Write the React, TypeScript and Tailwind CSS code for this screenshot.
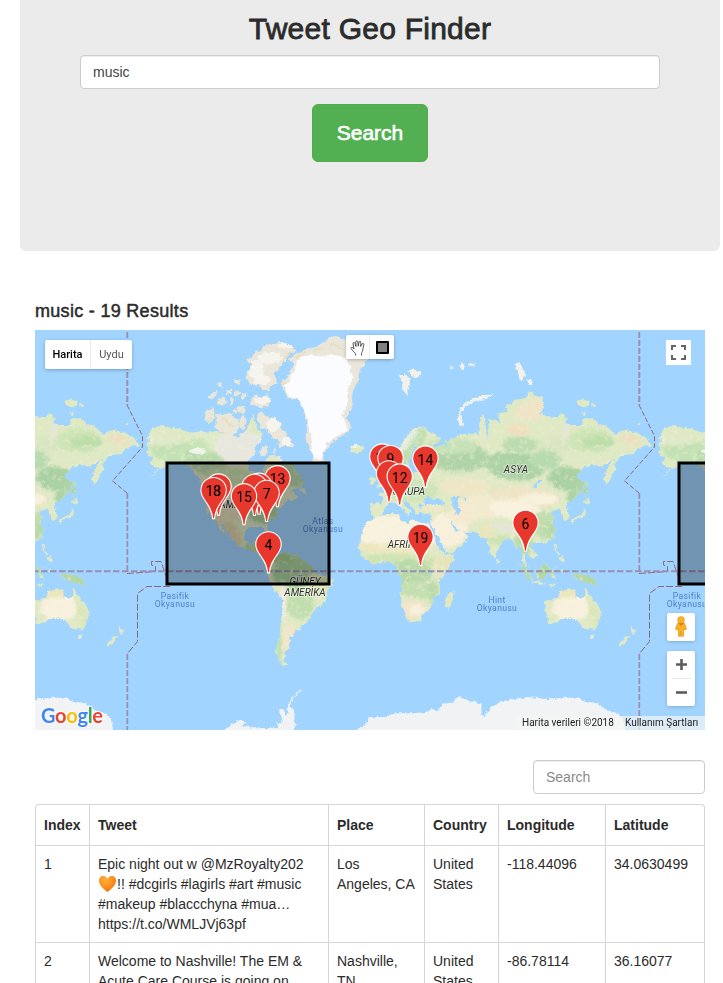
import React from "react";

// Coastlines, drawn at three units per map pixel. Each group has its own origin.
const AMERICAS_NORTH = [
  "M48,345 62,336 50,320 68,294 95,285 120,292 155,296 185,310 215,303 235,308 262,302 275,312 300,318 322,320 338,312 350,298 366,262 362,245 372,262 380,290 395,310 392,335 372,350 380,365 360,385 352,400 356,420 378,425 392,440 402,465 408,440 400,425 405,400 412,385 430,375 448,382 460,408 472,400 484,398 498,425 522,455 518,466 490,478 478,490 492,484 494,494 505,498 485,515 475,508 462,520 460,530 445,535 440,560 415,578 412,590 419,612 412,614 405,598 392,590 376,593 354,592 344,608 343,628 351,641 370,644 374,632 390,629 385,650 388,657 404,659 404,676 418,683 430,684 426,694 412,692 398,682 386,669 366,663 345,655 324,645 308,634 303,618 288,600 280,586 272,580 278,594 288,608 294,622 288,618 276,603 268,590 260,577 246,566 236,549 228,535 228,490 242,482 222,470 204,446 183,413 162,403 136,396 120,400 118,412 100,412 80,425 58,442 90,412 70,408 60,400 68,380 50,372 58,360Z",
  "M258,252 280,256 300,248 310,262 325,270 327,295 305,318 285,315 270,305 256,290 262,272Z",
  "M228,240 250,235 256,262 238,280 225,270Z",
  "M236,205 244,188 262,180 260,192 248,206Z",
  "M262,210 285,202 292,215 278,226 262,222Z",
  "M265,164 275,158 276,168 266,172Z",
  "M310,148 330,152 330,163 315,160Z",
  "M290,180 306,176 304,190 292,194Z M312,182 330,186 325,200 312,196Z",
  "M300,210 306,200 310,222 300,228Z M335,190 350,186 352,202 338,208Z",
  "M322,230 345,228 340,248 324,246Z M305,240 318,236 322,248 312,252Z",
  "M330,268 342,256 350,272 340,300 328,290Z",
  "M352,90 372,72 410,45 450,36 490,48 496,62 476,72 470,88 455,104 432,128 440,156 418,170 420,182 402,180 384,162 364,165 350,148 350,124 370,104Z",
  "M362,205 378,196 390,205 412,194 422,215 412,232 380,230 362,222Z",
  "M382,250 398,248 410,258 436,266 452,280 450,294 466,304 474,322 496,346 480,352 468,344 462,352 445,348 448,330 426,322 412,300 395,300 386,280Z",
  "M396,352 410,345 412,368 398,378 388,368Z M440,380 452,378 454,392 442,390Z M430,352 436,366 430,370Z",
  "M508,474 526,478 530,490 512,488Z",
  "M395,614 418,618 436,628 418,626 400,618Z M440,630 458,634 452,640 438,637Z",
  "M660,350 676,342 698,350 700,362 680,370 666,366Z",
];
const GREENLAND =
  "M548,393 L566,397 578,395 582,365 600,345 625,325 655,308 664,285 650,262 668,225 664,190 682,160 690,120 712,95 730,70 692,62 655,30 615,18 590,30 560,50 525,60 500,68 478,86 492,104 474,138 452,160 460,180 476,202 508,212 522,240 530,290 530,330 546,375Z";
const ICE_CAP =
  "M552,388 L576,388 584,355 592,340 625,316 652,302 648,280 636,258 654,225 656,170 668,140 660,110 645,82 600,72 570,84 535,74 505,88 488,125 478,148 458,172 480,198 512,212 526,250 540,310 546,360Z";
const AMERICA_SOUTH =
  "M100,86 112,72 135,68 160,73 178,80 200,98 216,112 228,130 262,138 278,150 276,164 262,185 256,215 232,232 214,250 211,264 196,282 180,285 186,298 160,306 162,318 148,324 154,334 142,345 147,354 133,368 136,380 128,388 136,398 148,404 130,406 115,390 108,370 112,340 118,320 122,280 128,240 130,205 112,190 95,165 85,145 83,132 90,115 92,100Z";
const EURASIA =
  "M120,143 118,120 150,80 163,57 184,30 215,19 250,42 272,54 268,70 246,74 258,86 280,72 292,80 284,62 310,58 330,42 350,46 375,36 385,48 386,22 390,-8 405,-12 408,20 410,60 416,32 415,0 435,-2 450,10 445,-20 470,-25 465,-40 500,-60 530,-70 540,-88 550,-75 580,-65 582,-35 565,-20 600,-10 625,-8 635,-20 650,-8 645,10 670,15 700,15 700,-5 730,-5 745,15 770,20 795,45 815,30 840,35 860,35 880,50 910,75 900,85 880,75 860,90 850,102 825,105 798,122 793,155 772,195 762,180 768,150 785,125 800,115 772,128 755,140 740,135 705,140 680,170 700,185 695,210 670,240 648,252 654,272 656,294 644,304 636,290 632,274 618,266 605,276 600,284 616,290 606,304 613,325 612,345 595,365 570,372 548,366 540,378 552,390 563,405 546,414 535,398 526,396 522,404 524,420 536,442 526,438 516,420 517,395 510,375 500,384 490,365 470,350 455,370 440,395 432,420 425,410 415,372 410,352 390,350 375,335 345,335 325,325 300,303 302,320 320,335 335,330 355,345 345,370 310,395 288,400 275,368 262,345 250,325 240,306 246,286 235,282 215,280 210,265 225,258 208,250 206,262 214,276 200,285 190,265 178,252 165,240 158,246 182,275 175,286 165,275 150,258 135,248 120,248 105,260 95,285 75,292 60,282 62,250 95,250 100,235 82,222 105,215 120,196 135,178 133,157 142,153 144,178 160,178 188,170 188,157 200,157 202,138 228,133 197,134 189,122 205,84 193,78 186,100 173,122 178,134 170,157 160,168 153,168 146,145 129,152Z";
const AFRICA =
  "M78,291 48,308 30,350 28,388 34,402 50,420 70,433 100,428 122,426 140,437 142,452 155,480 158,505 150,522 158,560 170,590 178,608 205,603 225,580 245,560 250,535 270,520 268,480 280,462 300,435 318,404 290,406 274,395 258,368 246,340 238,312 215,310 190,300 175,310 150,298 146,282 115,282Z";
const ASIA_ISLANDS = [
  "M285,560 288,528 302,520 312,508 308,535 296,566Z",
  "M59,178 68,170 76,180 70,194 60,192Z M84,146 98,144 95,165 108,190 102,200 78,204 88,186 84,165Z",
  "M438,412 448,420 444,428 438,424Z",
  "M508,432 524,442 546,470 544,484 524,466Z M546,482 568,484 590,492 572,494 548,488Z",
  "M555,452 572,444 588,430 600,438 592,462 578,478 560,470Z",
  "M602,450 620,444 608,456 616,472 608,474 603,464Z M595,494 622,494 606,500Z M632,442 640,456 634,456Z",
  "M660,458 676,462 690,460 720,472 736,484 744,494 724,488 700,490 678,472Z",
  "M612,372 622,374 618,392 630,400 626,404 614,390Z M628,410 640,408 640,426 628,420Z M608,346 614,350 610,362Z",
  "M660,302 678,288 696,284 702,262 708,280 700,294 680,298 668,308Z M702,240 718,236 716,250 702,252Z",
  "M706,180 712,195 708,236 702,220Z",
];
const AUSTRALIA =
  "M225,215 236,210 264,202 272,185 300,176 318,184 315,196 330,206 342,200 345,172 354,186 366,210 384,226 393,245 388,275 375,298 355,298 335,290 328,276 318,272 302,263 272,268 252,280 234,280 232,262 224,240Z M358,317 372,317 368,327 360,326Z M482,286 488,296 500,300 490,312 484,304Z M470,318 479,322 464,340 452,347 449,341Z";
const ARCTIC_ISLANDS =
  "M476,134 492,136 496,130 512,150 512,162 504,168 501,194 490,182 486,160Z M506,124 520,118 544,130 530,143 516,138Z M652,262 664,232 690,208 725,196 760,194 742,206 708,213 678,228 664,252 670,290 658,284Z M632,108 642,114 630,120Z M664,100 676,104 670,122 660,112Z M688,98 708,104 694,112Z";

function Land({ forms }: { forms: string[] }) {
  return (
    <>
      {forms.map((d) => (
        <path key={d} d={d} />
      ))}
    </>
  );
}

function LandShapes() {
  return (
    <>
      <g transform="translate(130 330) scale(.33333)">
        <Land forms={AMERICAS_NORTH} />
      </g>
      <g transform="translate(240 530) scale(.33333)">
        <path d={AMERICA_SOUTH} />
      </g>
      <g transform="translate(350 420) scale(.33333)">
        <Land forms={[EURASIA, AFRICA, ...ASIA_ISLANDS]} />
      </g>
      <g transform="translate(470 530) scale(.33333)">
        <path d={AUSTRALIA} />
      </g>
      <g transform="translate(470 330) scale(.33333)">
        <path d="M322,212 335,208 356,214 352,228 328,230Z M362,222 382,226 372,232Z M336,246 350,250 342,256Z M500,280 516,282 508,288Z" />
      </g>
    </>
  );
}

// [cx, cy, rx, ry, rotation, colour]
type Patch = [number, number, number, number, number, string];
const PATCHES: Patch[] = [
  // North America
  [175, 452, 26, 13, 15, "#c3e2b4"], [165, 440, 18, 6, 0, "#dfe9c8"], [205, 438, 20, 6, 0, "#dfeaca"],
  [240, 448, 26, 17, 0, "#e8e7df"], [206, 462, 22, 12, 20, "#b9d9ac"], [200, 446, 12, 7, 30, "#c8e5b8"],
  [234, 478, 28, 10, 10, "#cbe0ae"], [290, 475, 22, 12, 0, "#b8d8a8"], [214, 505, 13, 22, -10, "#e3d9b5"],
  [236, 510, 12, 12, 0, "#e2dcb8"], [262, 508, 17, 16, 20, "#a9d09b"], [232, 534, 8, 14, -30, "#ddd3a8"],
  [256, 550, 12, 7, 20, "#b3d69d"],
  // South America
  [294, 572, 22, 17, 0, "#a9d39d"], [282, 558, 10, 6, 0, "#a8cc93"], [318, 583, 12, 12, 0, "#dde5b5"],
  [300, 605, 14, 14, 0, "#c0deae"], [283, 600, 3, 22, 0, "#f2ece0"], [289, 638, 7, 14, 10, "#f1e6c8"], [279, 645, 2, 22, 0, "#b9dcb0"],
  // Europe and Russia
  [410, 448, 10, 24, 35, "#bfdfb1"], [408, 440, 4, 18, 35, "#e8ede0"], [412, 490, 26, 12, 0, "#cde5b8"],
  [460, 458, 30, 14, 0, "#b0d4a8"], [452, 446, 26, 8, 0, "#c6e2b6"], [515, 466, 30, 14, 5, "#acd2a6"],
  [520, 445, 18, 9, 0, "#bcdcaf"], [560, 445, 24, 8, 0, "#d7e5c0"], [590, 440, 22, 12, 0, "#cee5b6"],
  [598, 442, 16, 7, 0, "#bcdeab"], [566, 478, 18, 12, 0, "#a9d1a2"], [578, 492, 10, 16, 20, "#acd2a5"],
  [545, 460, 16, 10, 0, "#b8daaf"], [532, 410, 18, 10, -20, "#efe4c7"], [518, 430, 12, 6, 10, "#f0dfbf"],
  [630, 440, 12, 5, 15, "#ecdfbd"], [566, 432, 2, 12, 10, "#e9e5dd"],
  // Central and southern Asia
  [465, 487, 26, 9, 0, "#eee6c5"], [480, 507, 24, 13, 0, "#f3ead0"], [525, 497, 34, 10, 5, "#efe4c4"],
  [516, 510, 27, 10, 8, "#f9f2de"], [538, 499, 20, 6, 0, "#f8f1dc"], [505, 528, 16, 3, 15, "#e5e4da"],
  [545, 525, 14, 15, 0, "#c2deb0"], [552, 530, 8, 8, 0, "#b6d9a9"], [487, 535, 8, 12, 0, "#e9e5bd"],
  [500, 540, 12, 5, 0, "#cde2b4"], [524, 543, 9, 12, 0, "#b9dba8"], [448, 530, 20, 17, 0, "#f9f0dc"],
  [462, 515, 14, 10, 0, "#f5ead0"], [433, 508, 13, 5, 0, "#ebe8c8"],
  // Africa
  [396, 533, 42, 18, 3, "#f9f2df"], [395, 549, 38, 5, 4, "#eee7be"], [405, 561, 42, 7, 3, "#cfe3b3"],
  [410, 573, 22, 13, 0, "#b8d9a8"], [418, 590, 18, 9, 0, "#c4dfb0"], [412, 609, 15, 10, 0, "#efe4c7"],
  [416, 610, 8, 6, 0, "#f7efdc"], [444, 566, 12, 11, 0, "#e6e4bb"], [433, 592, 5, 12, 0, "#badba9"], [448, 600, 3, 10, 10, "#e5e5bd"],
  // Indonesia and Oceania
  [544, 571, 9, 9, 0, "#b1d7a6"], [522, 574, 9, 12, -45, "#b7daa8"], [586, 580, 16, 7, 20, "#b2d8a6"],
  [572, 608, 20, 13, 0, "#f8f1de"], [566, 594, 14, 4, 0, "#e8e7bd"], [594, 614, 5, 14, -20, "#dbe6b8"],
];

const SNOW: [number, number, number, number][] = [
  [270, 358, 12, 6], [256, 370, 8, 10], [262, 380, 9, 5], [288, 345, 10, 3], [262, 400, 8, 4], [273, 425, 6, 7], [286, 442, 5, 5],
  [198, 451, 8, 3], [502, 365, 6, 5], [522, 376, 6, 10], [528, 385, 5, 4], [354, 446, 4, 2], [408, 378, 8, 10],
];

function World() {
  return (
    <g filter="url(#coast)">
      <g fill="#dfe9c4">
        <LandShapes />
      </g>
      <g clipPath="url(#land)">
        {PATCHES.map(([cx, cy, rx, ry, a, fill], i) => (
          <ellipse key={i} cx={cx} cy={cy} rx={rx} ry={ry} transform={`rotate(${a} ${cx} ${cy})`} fill={fill} filter="url(#soft)" />
        ))}
        <rect x="120" y="330" width="530" height="350" filter="url(#relief)" opacity=".45" />
      </g>
      <g transform="translate(130 330) scale(.33333)">
        <g fill="#eae7da">
          <Land forms={AMERICAS_NORTH.slice(1, -3)} />
          <path d={GREENLAND} />
        </g>
        <path d={ICE_CAP} fill="#fbfcff" />
        <g stroke="#e9dcb8" strokeWidth="7" fill="none" opacity=".8">
          <path d="M500,82 530,66 M550,62 575,55 M600,40 640,58 M428,100 480,72 M362,110 384,96 M236,262 246,270 M275,265 312,290 M455,165 480,152" />
        </g>
      </g>
      <g fill="#f7f6f1">
        {SNOW.map(([x, y, rx, ry]) => (
          <ellipse key={`${x}-${y}`} cx={x} cy={y} rx={rx} ry={ry} opacity=".85" clipPath="url(#north)" />
        ))}
      </g>
      <g transform="translate(240 330) scale(.33333)" fill="#f3f2ea">
        <path d={ARCTIC_ISLANDS} />
        <path d="M823,102 836,98 846,112 856,136 850,152 838,148 834,122Z M862,150 874,146 878,160 866,168Z" />
      </g>
      {/* inland waters */}
      <g transform="translate(350 420) scale(.33333)" fill="#a1d4ff">
        <path d="M222,240 236,228 250,240 262,232 286,252 262,256 240,252 226,254Z" />
        <path d="M302,240 318,226 330,232 318,240 326,256 330,282 316,284 312,266Z" />
        <path d="M548,198 572,176 576,182 556,202Z M240,452 248,456 244,464 238,460Z M340,232 350,234 344,242Z" />
      </g>
      <g fill="#a1d4ff">
        <path d="M254,495l8,-3 4,4 -5,1 -3,7 -2,-6Z" />
      </g>
      {/* Antarctica */}
      <g transform="translate(470 530) scale(.33333)" fill="#f2f3f4">
        <path d="M-4,518 34,520 34,550 40,562 50,545 64,532 100,512 130,508 170,501 240,508 275,503 320,503 350,514 390,522 400,534 440,548 464,574 460,620 -4,620Z" />
      </g>
      <g transform="translate(240 530) scale(.33333)" fill="#f1f2f3">
        <path d="M-42,596 -20,578 0,572 18,574 20,582 0,588 70,594 118,594 108,578 128,576 120,538 136,540 134,560 142,550 144,524 158,502 184,476 184,482 164,500 148,528 162,540 166,620 -42,620Z M348,604 384,576 384,562 440,560 455,550 520,550 570,544 575,534 590,544 612,522 640,514 655,500 690,514 724,520 724,620 348,620Z" />
      </g>
    </g>
  );
}

function DateLine() {
  return (
    <g fill="none" stroke="#8d6678" strokeWidth="1">
      <path d="M127.300,332V405" stroke="#9c90b2" strokeWidth="2" strokeDasharray="6 2" />
      <path d="M127,405 142.500,436V447L112.500,481 127,493" strokeDasharray="5 2" />
      <path d="M127.300,493V573" stroke="#9c90b2" strokeWidth="1.8" strokeDasharray="6 2" />
      <path d="M127,573.5 155.500,571.5V566.500L151.500,565V561.500H161L166.500,577 M170,586.500H147L137.500,593.500V641.500L127,654" strokeDasharray="7 2" />
      <path d="M127.300,654V730" stroke="#9c90b2" strokeWidth="1.8" strokeDasharray="6 2" />
    </g>
  );
}

type PinData = { x: number; y: number; label?: string; dx?: number };
const PINS: PinData[] = [
  { x: 382.4, y: 456.6, label: "1", dx: -3 },
  { x: 390.5, y: 458.2, label: "9" },
  { x: 425.4, y: 458.6, label: "14" },
  { x: 389, y: 473.5 },
  { x: 399.7, y: 476.6, label: "12" },
  { x: 277.5, y: 478.3, label: "13" },
  { x: 259, y: 485.8 },
  { x: 254.5, y: 487 },
  { x: 218.5, y: 486.6 },
  { x: 213.6, y: 490.2, label: "13" },
  { x: 266.6, y: 493, label: "7" },
  { x: 244, y: 496.3, label: "15" },
  { x: 525.5, y: 522.8, label: "6" },
  { x: 420.5, y: 537, label: "19" },
  { x: 268.5, y: 544.4, label: "4" },
];

function Pin({ x, y, label, dx = 0 }: PinData) {
  return (
    <g transform={`translate(${x} ${y})`}>
      <path
        d="M-1,28.500 C-1.500,20 -5,15.500 -8.500,10.500 C-11,7 -12.700,4 -12.700,0 A12.700,12.700 0 0 1 12.700,0 C12.700,4 11,7 8.500,10.500 C5,15.500 1.500,20 1,28.500 Z"
        fill="#e8382d"
        stroke="#fff"
        strokeWidth="1.1"
      />
      {label && (
        <text x={dx} y="6" textAnchor="middle" className="font-[Roboto,sans-serif] text-[14px]" fill="#000">
          {label}
        </text>
      )}
    </g>
  );
}

function MapCanvas() {
  return (
    <svg viewBox="35 330 670 400" width="670" height="400" className="block">
      <defs>
        <filter id="coast" x="120" y="320" width="540" height="420" filterUnits="userSpaceOnUse" colorInterpolationFilters="sRGB">
          <feTurbulence type="fractalNoise" baseFrequency=".22" numOctaves="3" seed="4" result="n" />
          <feDisplacementMap in="SourceGraphic" in2="n" scale="5" xChannelSelector="R" yChannelSelector="G" />
        </filter>
        <filter id="soft" x="-30%" y="-30%" width="160%" height="160%" colorInterpolationFilters="sRGB">
          <feGaussianBlur stdDeviation="1.6" />
        </filter>
        <filter id="relief" x="0" y="0" width="100%" height="100%" colorInterpolationFilters="sRGB">
          <feTurbulence type="fractalNoise" baseFrequency=".2" numOctaves="4" seed="9" />
          <feColorMatrix values="0 0 0 0 .95  0 0 0 0 .94  0 0 0 0 .85  0 4 0 0 -2.1" />
        </filter>
        <clipPath id="north">
          {AMERICAS_NORTH.map((d) => (
            <path key={d} d={d} transform="translate(130 330) scale(.33333)" />
          ))}
        </clipPath>
        <clipPath id="land">
          {AMERICAS_NORTH.map((d) => (
            <path key={d} d={d} transform="translate(130 330) scale(.33333)" />
          ))}
          <path d={AMERICA_SOUTH} transform="translate(240 530) scale(.33333)" />
          {[EURASIA, AFRICA, ...ASIA_ISLANDS].map((d) => (
            <path key={d} d={d} transform="translate(350 420) scale(.33333)" />
          ))}
          <path d={AUSTRALIA} transform="translate(470 530) scale(.33333)" />
        </clipPath>
        <g id="world">
          <World />
        </g>
        <g id="dateline">
          <DateLine />
        </g>
      </defs>
      <rect x="35" y="330" width="670" height="400" fill="#a1d4ff" />
      <use href="#world" />
      <use href="#world" x="-512" />
      <use href="#world" x="512" />
      <use href="#dateline" />
      <use href="#dateline" x="512" />
      <path d="M32,571.200H705" stroke="#9a8fb0" strokeWidth="1.9" strokeDasharray="6.500 2.500" />

      <g className="font-[Roboto,sans-serif]" textAnchor="middle">
        <g fill="#4f7fc8" fontSize="8.600" letterSpacing=".35">
          <text x="175" y="599">Pasifik</text>
          <text x="175" y="607">Okyanusu</text>
          <text x="687" y="599">Pasifik</text>
          <text x="687" y="607">Okyanusu</text>
          <text x="323" y="524">Atlas</text>
          <text x="323" y="532">Okyanusu</text>
          <text x="497" y="602.500">Hint</text>
          <text x="497" y="610.500">Okyanusu</text>
        </g>
        <g fill="#2c2f2c" fontSize="10" fontStyle="italic" stroke="#fff" strokeOpacity=".55" strokeWidth="1.500" paintOrder="stroke">
          <text x="516" y="472.500" letterSpacing=".2">ASYA</text>
          <text x="407" y="495">AVRUPA</text>
          <text x="404" y="548">AFRİKA</text>
          <text x="305" y="585">GÜNEY</text>
          <text x="305" y="595.500">AMERİKA</text>
          <text x="240" y="508">AMERİKA</text>
        </g>
      </g>

      <g fill="#000" fillOpacity=".3" stroke="#000" strokeWidth="3">
        <rect x="167" y="463" width="162" height="121" />
        <rect x="679" y="463" width="162" height="121" />
      </g>
      {PINS.map((p, i) => (
        <Pin key={i} {...p} />
      ))}
      <text x="217" y="496.200" textAnchor="middle" className="font-[Roboto,sans-serif] text-[14px]">
        8
      </text>
    </svg>
  );
}

function HandIcon() {
  return (
    <svg width="16" height="16" viewBox="0 0 16 16" fill="#fff" stroke="#444" strokeWidth=".9" strokeLinejoin="round">
      <path d="M5.500,15.500V13.500L3.500,11.500 1,8.500C.5,7.500 1.800,6.800 2.600,7.600L4,9 3,3.500C2.800,2.200 4.400,2 4.800,3.200L6,6.500 5.800,1.800C5.800,.5 7.600,.5 7.800,1.800L8.300,6.200 9,2C9.200,.8 10.800,1 10.800,2.200L10.700,6.500 12.200,3.800C12.800,2.800 14.200,3.400 13.900,4.500L13,8.500C12.800,11 12,12 11.500,13.500V15.500" />
    </svg>
  );
}

function Pegman() {
  return (
    <svg width="14" height="21" viewBox="0 0 14 21">
      <path d="M3.500,7.200H10.500L12.500,13 10.800,14 9.800,12.500 9.600,20.300H7.500L7,15 6.500,20.300H4.400L4.200,12.500 3.200,14 1.500,13Z" fill="#fab51e" stroke="#d8871a" strokeWidth=".6" />
      <circle cx="7" cy="3.900" r="3.400" fill="#fab51e" stroke="#d8871a" strokeWidth=".5" />
      <path d="M4,7.200H10L7,10Z" fill="#e5751f" />
    </svg>
  );
}

function HeartEmoji() {
  return (
    <svg width="19" height="18" viewBox="0 0 19 18" className="-mt-[3px] inline-block h-[18px] w-[19px] align-[-4px]">
      <defs>
        <radialGradient id="heart" cx=".4" cy=".25" r=".8">
          <stop offset="0" stopColor="#ffb13b" />
          <stop offset=".6" stopColor="#fb8b1a" />
          <stop offset="1" stopColor="#e56a0c" />
        </radialGradient>
      </defs>
      <path d="M9.500,17 C6,14 1,10.500 1,5.700 C1,3 2.800,1 5.200,1 C7.200,1 8.700,2.200 9.500,4 C10.300,2.200 11.800,1 13.800,1 C16.200,1 18,3 18,5.700 C18,10.500 13,14 9.500,17Z" fill="url(#heart)" />
    </svg>
  );
}

const GOOGLE: [string, string][] = [
  ["G", "#4285f4"], ["o", "#ea4335"], ["o", "#fbbc05"], ["g", "#4285f4"], ["l", "#34a853"], ["e", "#ea4335"],
];

function MapPanel() {
  return (
    <div className="relative h-[400px] w-[670px] overflow-hidden font-[Roboto,sans-serif]">
      <MapCanvas />
      <div className="absolute left-[10px] top-[10px] flex h-[29px] rounded-[2px] bg-white text-[11px] leading-[29px] shadow-[0_1px_4px_-1px_rgba(0,0,0,0.4)]">
        <div className="w-[46px] border-r border-[#ededed] text-center font-medium text-black">Harita</div>
        <div className="w-[41px] text-center text-[#565656]">Uydu</div>
      </div>
      <div className="absolute left-[311px] top-[5px] flex h-6 w-12 rounded-[2px] bg-white shadow-[0_1px_4px_-1px_rgba(0,0,0,0.4)]">
        <div className="flex w-6 items-center justify-center border-r border-[#ededed] pl-px pt-px">
          <HandIcon />
        </div>
        <div className="flex w-6 items-center justify-center">
          <div className="h-[13px] w-[13px] rounded-[1px] border-2 border-black bg-[#808080]" />
        </div>
      </div>
      <div className="absolute left-[631px] top-[10px] flex h-[25px] w-[25px] items-center justify-center bg-white">
        <svg width="15" height="15" viewBox="0 0 15 15" fill="none" stroke="#666" strokeWidth="2">
          <path d="M1,5V1H5 M10,1H14V5 M14,10V14H10 M5,14H1V10" />
        </svg>
      </div>
      <div className="absolute left-[632px] top-[283px] flex h-7 w-7 items-center justify-center rounded-[2px] bg-white pb-[2px] shadow-[0_1px_4px_-1px_rgba(0,0,0,0.3)]">
        <Pegman />
      </div>
      <div className="absolute left-[632px] top-[321px] flex h-[55px] w-7 flex-col items-center rounded-[2px] bg-white shadow-[0_1px_4px_-1px_rgba(0,0,0,0.3)]">
        <div className="flex h-[27px] items-center">
          <svg width="11" height="11" viewBox="0 0 11 11" stroke="#5c5c5c" strokeWidth="2.600">
            <path d="M0,5.500H11M5.500,0V11" />
          </svg>
        </div>
        <div className="h-px w-[19px] bg-[#e6e6e6]" />
        <div className="flex h-[27px] items-center">
          <svg width="11" height="11" viewBox="0 0 11 11" stroke="#5c5c5c" strokeWidth="2.600">
            <path d="M0,5.500H11" />
          </svg>
        </div>
      </div>
      <svg width="70" height="30" viewBox="0 0 70 30" className="absolute bottom-0 left-[4px]">
        <text
          x="2"
          y="22.500"
          textLength="62"
          className="font-[Lato,sans-serif] text-[20px] font-bold"
          stroke="#fff"
          strokeOpacity=".7"
          strokeWidth="2"
          paintOrder="stroke"
        >
          {GOOGLE.map(([c, fill], i) => (
            <tspan key={i} fill={fill}>
              {c}
            </tspan>
          ))}
        </text>
      </svg>
      <div className="absolute bottom-0 right-0 flex h-[14px] items-center whitespace-nowrap bg-[#f5f5f5]/70 text-[10px] leading-[14px] text-[#222]">
        <span className="w-[103px] pl-[6px]">Harita verileri ©2018</span>
        <span className="w-[86px] pl-[6px]">Kullanım Şartları</span>
      </div>
    </div>
  );
}

const COLUMNS = [
  { title: "Index", width: "w-[54px]" },
  { title: "Tweet", width: "w-[239px]" },
  { title: "Place", width: "w-[96px]" },
  { title: "Country", width: "w-[74px]" },
  { title: "Longitude", width: "w-[107px]" },
  { title: "Latitude", width: "w-[98px]" },
];

const ROWS: React.ReactNode[][] = [
  [
    "1",
    <>
      Epic night out w @MzRoyalty202
      <br />
      <HeartEmoji />
      !! #dcgirls #lagirls #art #music
      <br />
      #makeup #blaccchyna #mua…
      <br />
      https://t.co/WMLJVj63pf
    </>,
    <>
      Los
      <br />
      Angeles, CA
    </>,
    <>
      United
      <br />
      States
    </>,
    "-118.44096",
    "34.0630499",
  ],
  [
    "2",
    <>
      Welcome to Nashville! The EM &amp;
      <br />
      Acute Care Course is going on
    </>,
    <>
      Nashville,
      <br />
      TN
    </>,
    <>
      United
      <br />
      States
    </>,
    "-86.78114",
    "36.16077",
  ],
];

function ResultsTable() {
  return (
    <div className="w-[670px] rounded-t border border-b-0 border-[#d6d6d6] text-[14px] leading-5">
      <div className="flex h-10">
        {COLUMNS.map((c, i) => (
          <div key={c.title} className={`${c.width} shrink-0 px-2 py-[10px] font-bold ${i < 5 ? "border-r border-[#d6d6d6]" : ""}`}>
            {c.title}
          </div>
        ))}
      </div>
      {ROWS.map((row, r) => (
        <div key={r} className="flex h-[97px] border-t border-[#d6d6d6]">
          {row.map((cell, i) => (
            <div key={i} className={`${COLUMNS[i].width} shrink-0 whitespace-nowrap px-2 pt-2 ${i < 5 ? "border-r border-[#d6d6d6]" : ""}`}>
              {cell}
            </div>
          ))}
        </div>
      ))}
    </div>
  );
}

export default function App() {
  return (
    <div className="h-[983px] w-[723px] overflow-hidden bg-white font-['Liberation_Sans',Arial,sans-serif] text-[#2b2b2b]">
      <header className="ml-5 flex h-[251px] w-[700px] flex-col items-center rounded-b-md bg-[#ebebeb]">
        <h1 className="mt-3 text-[30px] leading-[33px] tracking-[0.25px] [-webkit-text-stroke:0.8px_#2b2b2b]">Tweet Geo Finder</h1>
        <input
          readOnly
          value="music"
          className="mt-[10px] h-[34px] w-[580px] shrink-0 rounded border border-[#ccc] bg-white px-3 text-[14px] text-[#444] shadow-[inset_0_1px_1px_rgba(0,0,0,0.075)] outline-none"
        />
        <button className="mt-[15px] h-[58px] w-[116px] rounded-md border border-[#4cae4c] bg-[#52af52] text-[21px] text-white [-webkit-text-stroke:0.6px_#fff]">
          Search
        </button>
      </header>
      <main className="ml-[35px] w-[670px]">
        <h2 className="pt-[50px] text-[18px] leading-5 tracking-[0.3px] [-webkit-text-stroke:0.5px_#2b2b2b]">music - 19 Results</h2>
        <div className="mt-[9px]">
          <MapPanel />
        </div>
        <div className="mb-[10px] mt-[30px] flex justify-end">
          <input
            readOnly
            placeholder="Search"
            className="h-[34px] w-[172px] rounded border border-[#ccc] bg-white px-3 text-[14px] shadow-[inset_0_1px_1px_rgba(0,0,0,0.075)] outline-none placeholder:text-[#8a8a8a]"
          />
        </div>
        <ResultsTable />
      </main>
    </div>
  );
}
